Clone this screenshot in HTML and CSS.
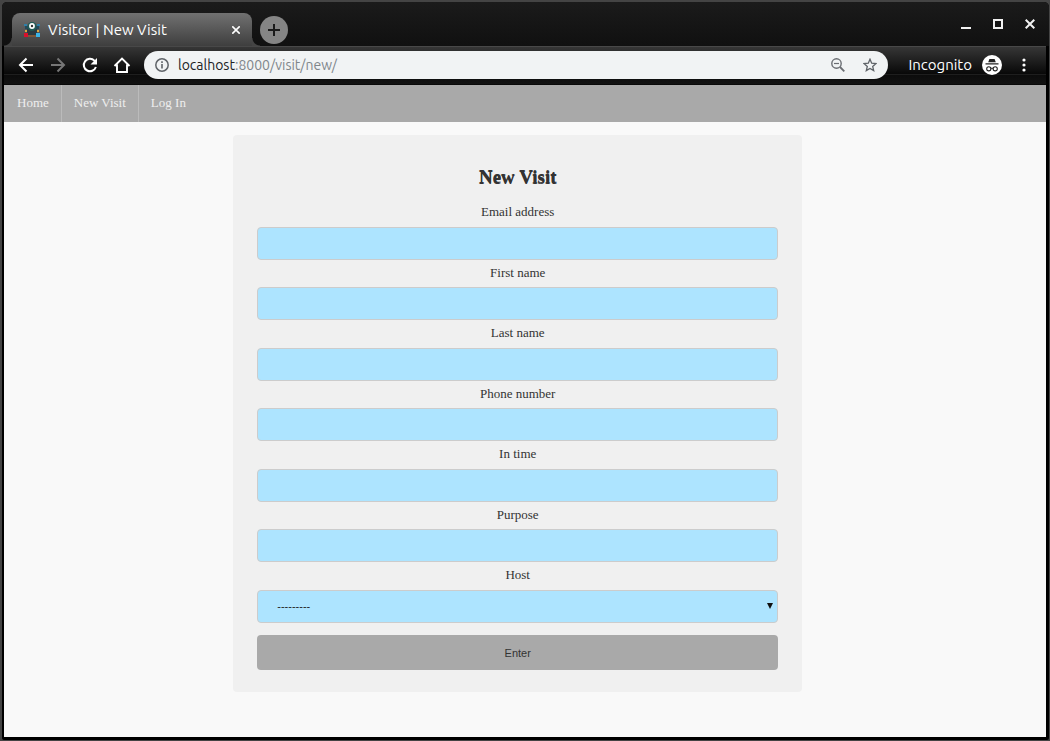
FILE: index.html
```html
<!DOCTYPE html>
<html lang="en">
<head>
<meta charset="utf-8">
<meta name="viewport" content="width=device-width, initial-scale=1">
<title>Visitor | New Visit</title>
<link rel="stylesheet" href="styles.css">
</head>
<body>
<div class="window">
  <header class="titlebar">
    <div class="tab">
      <svg class="favicon" viewBox="0 0 16 16" width="16" height="16" aria-hidden="true">
        <path fill="#2b3a40" d="M3 4h10v9H3z"/>
        <path fill="#2f7fa8" d="M0 2h3v2H0zM13 2h3v2h-3z"/>
        <path fill="#24495a" d="M1 4h3v3H1zM12 4h3v3h-3z"/>
        <path fill="#d9a441" d="M1 8h2v2H1zM13 8h2v2h-2z"/>
        <path fill="#d8102c" d="M0 11h4v4H0z"/>
        <path fill="#3bb4e6" d="M12 11h4v4h-4z"/>
        <path fill="#7a5638" d="M4 13h8v2H4z"/>
        <circle cx="8" cy="4.500" r="4.500" fill="#1f5a55"/>
        <circle cx="8" cy="4" r="2.900" fill="#fff"/>
        <circle cx="8" cy="4" r="1.200" fill="#333"/>
      </svg>
      <span class="tab-title">Visitor | New Visit</span>
      <button class="tab-close" type="button" aria-label="Close tab">
        <svg viewBox="0 0 8 8" width="8" height="8"><path d="M.3.3l7.400 7.400M7.700.3L.3 7.700" stroke="#fff" stroke-width="1.600"/></svg>
      </button>
    </div>
    <button class="new-tab" type="button" aria-label="New tab">
      <svg viewBox="0 0 12 12" width="12" height="12"><path d="M6 0v12M0 6h12" stroke="#1b1b1b" stroke-width="2"/></svg>
    </button>
    <div class="window-controls">
      <button type="button" aria-label="Minimize"><svg viewBox="0 0 10 10" width="10" height="10"><path d="M0 9h10" stroke="#f1f1f1" stroke-width="2"/></svg></button>
      <button type="button" aria-label="Maximize"><svg viewBox="0 0 10 10" width="10" height="10"><path d="M1 1h8v8H1z" fill="none" stroke="#f1f1f1" stroke-width="2"/></svg></button>
      <button type="button" aria-label="Close window"><svg viewBox="0 0 10 10" width="10" height="10"><path d="M.7.7l8.6 8.6M9.3.7L.7 9.3" stroke="#f1f1f1" stroke-width="2"/></svg></button>
    </div>
  </header>

  <div class="toolbar">
    <button class="tool" type="button" aria-label="Back">
      <svg viewBox="0 0 16 16" width="16" height="16"><path d="M15 8H2M8.500 1.500L2 8l6.500 6.500" fill="none" stroke="#fff" stroke-width="2"/></svg>
    </button>
    <button class="tool" type="button" aria-label="Forward" disabled>
      <svg viewBox="0 0 16 16" width="16" height="16"><path d="M1 8h13M7.500 1.500L14 8l-6.500 6.500" fill="none" stroke="#777" stroke-width="2"/></svg>
    </button>
    <button class="tool" type="button" aria-label="Reload">
      <svg viewBox="0 0 16 16" width="16" height="16"><path d="M13.900 10A6.200 6.200 0 1 1 12.400 3.600L13.500 4.700" fill="none" stroke="#fff" stroke-width="2"/><path d="M15 1v6.500H8.500z" fill="#fff"/></svg>
    </button>
    <button class="tool" type="button" aria-label="Home">
      <svg viewBox="0 0 18 18" width="18" height="18"><path d="M1.500 10L9 2.500 16.500 10M4 8.500V16h10V8.500" fill="none" stroke="#fff" stroke-width="1.900"/></svg>
    </button>
    <div class="address">
      <button class="address-icon" type="button" aria-label="View site information">
        <svg viewBox="0 0 14 14" width="14" height="14"><circle cx="7" cy="7" r="6.200" fill="none" stroke="#5f6368" stroke-width="1.500"/><path d="M7 6v4.500M7 3.300v1.600" stroke="#5f6368" stroke-width="1.600"/></svg>
      </button>
      <span class="url" role="textbox" contenteditable="true" spellcheck="false" aria-label="Address"><span class="url-host">localhost</span>:8000/visit/new/</span>
      <button class="address-icon" type="button" aria-label="Zoom out">
        <svg viewBox="0 0 14 14" width="14" height="14"><circle cx="5.500" cy="5.500" r="4.700" fill="none" stroke="#6a6d72" stroke-width="1.400"/><path d="M9 9l4.300 4.300" stroke="#6a6d72" stroke-width="1.800"/><path d="M3 5.500h5" stroke="#6a6d72" stroke-width="1.200"/></svg>
      </button>
      <button class="address-icon" type="button" aria-label="Bookmark this page">
        <svg viewBox="0 0 14 14" width="14" height="14"><path d="M7 1.200l1.700 4 4.300.4-3.300 2.800 1 4.200L7 10.400l-3.700 2.200 1-4.200L1 5.600l4.300-.4z" fill="none" stroke="#5f6368" stroke-width="1.300"/></svg>
      </button>
    </div>
    <div class="incognito">
      <span>Incognito</span>
      <svg viewBox="0 0 20 20" width="20" height="20" aria-hidden="true">
        <circle cx="10" cy="10" r="10" fill="#fff"/>
        <path d="M7.400 4h5.200l1.200 3.300H6.200zM3.500 8.300h13v1.200h-13z" fill="#222"/>
        <circle cx="6.800" cy="13.800" r="2.100" fill="none" stroke="#222" stroke-width="1.100"/>
        <circle cx="13.200" cy="13.800" r="2.100" fill="none" stroke="#222" stroke-width="1.100"/>
        <path d="M8.800 13.500q1.200-.8 2.400 0" fill="none" stroke="#222"/>
      </svg>
    </div>
    <button class="menu" type="button" aria-label="Menu">
      <svg viewBox="0 0 4 14" width="4" height="14"><g fill="#fff"><circle cx="2" cy="2" r="1.600"/><circle cx="2" cy="7" r="1.600"/><circle cx="2" cy="12" r="1.600"/></g></svg>
    </button>
  </div>

  <div class="page">
    <nav class="nav">
      <a href="#home">Home</a>
      <a href="#new">New Visit</a>
      <a href="#login">Log In</a>
    </nav>
    <main class="card">
      <h1>New Visit</h1>
      <form>
        <div class="field"><label for="email">Email address</label><input id="email" type="email"></div>
        <div class="field"><label for="first">First name</label><input id="first" type="text"></div>
        <div class="field"><label for="last">Last name</label><input id="last" type="text"></div>
        <div class="field"><label for="phone">Phone number</label><input id="phone" type="tel"></div>
        <div class="field"><label for="time">In time</label><input id="time" type="text"></div>
        <div class="field"><label for="purpose">Purpose</label><input id="purpose" type="text"></div>
        <div class="field">
          <label for="host">Host</label>
          <div class="select">
            <select id="host"><option>---------</option></select>
            <svg viewBox="0 0 6 6" width="6" height="6" aria-hidden="true"><path d="M0 0h6L3 6z" fill="#111"/></svg>
          </div>
        </div>
        <button class="submit" type="submit">Enter</button>
      </form>
    </main>
  </div>
</div>
</body>
</html>
```

FILE: styles.css
```css
*, *::before, *::after { box-sizing: border-box; }

body {
  display: flex;
  min-height: 100vh;
  margin: 0;
  padding: 2px 1px 1px 2px;
  background: #444;
}

button {
  display: flex;
  align-items: center;
  justify-content: center;
  margin: 0;
  padding: 0;
  border: 0;
  background: none;
}

svg { display: block; flex: none; }

.window {
  display: flex;
  flex: 1;
  flex-direction: column;
  min-width: 0;
  padding-bottom: 3px;
  border-radius: 5px 5px 2px 2px;
  background: #000;
  font-family: Ubuntu, "Noto Sans", sans-serif;
}

/* Title bar */
.titlebar {
  display: flex;
  align-items: flex-end;
  height: 44px;
  padding-left: 10px;
  border-radius: 5px 5px 0 0;
  background: linear-gradient(#1b1b1b, #101010);
}

.tab {
  position: relative;
  display: flex;
  align-items: center;
  width: 240px;
  height: 33px;
  padding: 0 12px;
  border-radius: 8px 8px 0 0;
  background: linear-gradient(#717171, #3e3e3e);
}

.tab::before, .tab::after {
  content: "";
  position: absolute;
  bottom: 0;
  width: 8px;
  height: 8px;
}

.tab::before {
  right: 100%;
  background: radial-gradient(circle at 0 0, transparent 7px, #444 8px);
}

.tab::after {
  left: 100%;
  background: radial-gradient(circle at 100% 0, transparent 7px, #444 8px);
}

.tab-title {
  flex: 1;
  padding-left: 8px;
  color: #fff;
  font-size: 15px;
  line-height: 20px;
  white-space: nowrap;
}

.tab-close { width: 8px; height: 16px; }

.new-tab {
  width: 28px;
  height: 28px;
  margin: 0 0 2px 8px;
  border-radius: 50%;
  background: #858585;
}

.window-controls {
  display: flex;
  align-self: stretch;
  margin-left: auto;
  padding-right: 3px;
}

.window-controls button { width: 32px; height: 44px; }

/* Toolbar */
.toolbar {
  display: flex;
  align-items: center;
  height: 39px;
  margin: 0 3px 0 2px;
  padding: 0 6px 2px;
  border-top: 1px solid #484848;
  background: linear-gradient(#363636, #080808 27px, #1e1e1e 27px, #1e1e1e 28px, #0c0c0c 28px, #111 37px, #000 38px);
}

.tool { width: 32px; height: 28px; }

.address {
  display: flex;
  flex: 1;
  align-items: center;
  height: 28px;
  margin-left: 6px;
  padding: 0 2px;
  border-radius: 14px;
  background: #f1f3f4;
}

.address-icon { width: 32px; height: 28px; }

.url {
  flex: 1;
  outline: 0;
  color: #80868b;
  font-size: 14px;
  line-height: 20px;
  white-space: nowrap;
}

.url-host { color: #202124; }

.incognito {
  display: flex;
  align-items: center;
  gap: 10px;
  margin-left: 20px;
  color: #fff;
  font-size: 15px;
  line-height: 20px;
}

.menu { width: 32px; height: 28px; margin-left: 6px; }

/* Page */
.page {
  flex: 1;
  margin: 0 3px 0 2px;
  padding-bottom: 20px;
  background: #f9f9f9;
  color: #333;
  font-family: "Liberation Serif", serif;
  font-size: 13px;
}

.nav {
  display: flex;
  height: 37px;
  padding-left: 1px;
  background: #a9a9a9;
}

.nav a {
  padding: 0 12px;
  border-right: 1px solid #bbb;
  color: #eee;
  line-height: 36px;
  text-decoration: none;
}

.nav a:last-child { border-right: 0; }

.card {
  width: 54.6%;
  margin: 13px 0 0 22%;
  padding: 24px 24px 22px;
  border-radius: 4px;
  background: #f0f0f0;
  text-align: center;
}

h1 {
  margin: 0 0 7px;
  font-size: 19px;
  line-height: 36px;
  text-shadow: 0 1px #333;
}

.field { margin-bottom: 3px; }

.field label {
  display: block;
  margin-bottom: 5px;
  line-height: 1.5;
}

.field input, .field select {
  display: block;
  width: 100%;
  height: 33px;
  margin: 0;
  padding: 0 19px;
  border: 1px solid #ccc;
  border-radius: 4px;
  background: #ade4ff;
  color: #222;
  font-family: "Liberation Sans", sans-serif;
  font-size: 11px;
}

.field select { appearance: none; }

.select { position: relative; }

.select svg {
  position: absolute;
  top: 13px;
  right: 5px;
  pointer-events: none;
}

.submit {
  width: 100%;
  height: 35px;
  margin-top: 12px;
  padding-top: 1px;
  border-radius: 4px;
  background: #a9a9a9;
  color: #333;
  font-family: "Liberation Sans", sans-serif;
  font-size: 11px;
}
```
